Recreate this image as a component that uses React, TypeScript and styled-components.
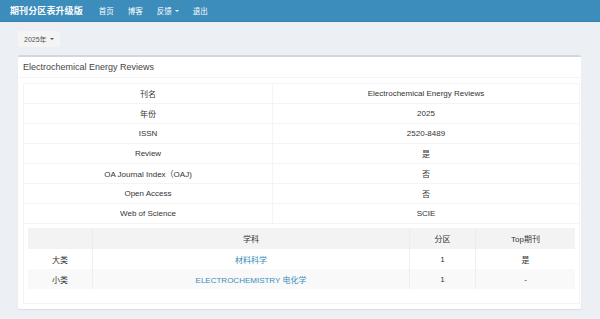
import React from 'react'
import styled, { createGlobalStyle } from 'styled-components'

const GlobalStyle = createGlobalStyle`
html, body {
  margin: 0;
  padding: 0;
  height: 100%;
  background: #ecf0f5;
}
body {
  font-family: "Liberation Sans", Arial, "Noto Sans CJK SC", sans-serif;
  color: #333;
}
`

const info: [string, string][] = [
  ['刊名', 'Electrochemical Energy Reviews'],
  ['年份', '2025'],
  ['ISSN', '2520-8489'],
  ['Review', '是'],
  ['OA Journal Index（OAJ)', '否'],
  ['Open Access', '否'],
  ['Web of Science', 'SCIE'],
]

const subjects = [
  { kind: '大类', name: '材料科学', zone: '1', top: '是' },
  { kind: '小类', name: 'ELECTROCHEMISTRY 电化学', zone: '1', top: '-' },
]

const App = () => {
  return (
    <>
      <GlobalStyle />
      <Navbar>
        <Brand>期刊分区表升级版</Brand>
        <NavItem>首页</NavItem>
        <NavItem>博客</NavItem>
        <NavItem>
          反馈<Caret />
        </NavItem>
        <NavItem>退出</NavItem>
      </Navbar>
      <Content>
        <YearButton>
          2025年<Caret />
        </YearButton>
        <Box>
          <BoxHeader>Electrochemical Energy Reviews</BoxHeader>
          <BoxBody>
            <InfoTable>
              <tbody>
                {info.map(([k, v]) => (
                  <tr key={k}>
                    <InfoCell $first>{k}</InfoCell>
                    <InfoCell>{v}</InfoCell>
                  </tr>
                ))}
                <tr>
                  <NestCell colSpan={2}>
                    <SubjectTable>
                      <thead>
                        <SubRow $bg="#f3f3f3">
                          <SubHead $w={64}></SubHead>
                          <SubHead $w={316}>学科</SubHead>
                          <SubHead $w={65}>分区</SubHead>
                          <SubHead $w={99}>Top期刊</SubHead>
                        </SubRow>
                      </thead>
                      <tbody>
                        {subjects.map((s, i) => (
                          <SubRow key={s.kind} $bg={i % 2 ? '#f9f9f9' : '#fff'}>
                            <SubCell>{s.kind}</SubCell>
                            <SubCell>
                              <Link>{s.name}</Link>
                            </SubCell>
                            <SubCell>{s.zone}</SubCell>
                            <SubCell>{s.top}</SubCell>
                          </SubRow>
                        ))}
                      </tbody>
                    </SubjectTable>
                  </NestCell>
                </tr>
              </tbody>
            </InfoTable>
          </BoxBody>
        </Box>
      </Content>
    </>
  )
}

export default App

const Navbar = styled.div`
display: flex;
align-items: center;
height: 21px;
background: #3c8dbc;
border-bottom: 1px solid #367fa9;
color: #fff;
`
const Brand = styled.div`
font-size: 9px;
font-weight: bold;
padding: 0 9px 0 10px;
letter-spacing: 0.1px;
`
const NavItem = styled.div`
display: flex;
align-items: center;
font-size: 7.5px;
padding: 0 7px;
`
const Caret = styled.span`
display: inline-block;
width: 0;
height: 0;
margin-left: 3px;
border-top: 2.5px solid currentColor;
border-left: 2.5px solid transparent;
border-right: 2.5px solid transparent;
`
const Content = styled.div`
padding: 9px 19px 0 18px;
`
const YearButton = styled.div`
display: flex;
width: fit-content;
align-items: center;
height: 16px;
padding: 0 6px;
background: #f4f4f4;
border-radius: 2px;
font-size: 7px;
color: #555;
`
const Box = styled.div`
margin-top: 8px;
background: #fff;
border-top: 2px solid #d2d6de;
border-radius: 2px;
box-shadow: 0 1px 1px rgba(0, 0, 0, 0.08);
`
const BoxHeader = styled.div`
height: 20px;
display: flex;
align-items: center;
padding: 0 5px;
font-size: 9px;
color: #444;
border-bottom: 1px solid #f4f4f4;
`
const BoxBody = styled.div`
padding: 5px;
`
const InfoTable = styled.table`
width: 100%;
border-collapse: collapse;
border: 1px solid #f4f4f4;
font-size: 8px;
`
const InfoCell = styled.td<{ $first?: boolean }>`
height: 19px;
padding: 0;
text-align: center;
border: 1px solid #f4f4f4;
width: ${(p) => (p.$first ? '248px' : 'auto')};
`
const NestCell = styled.td`
padding: 4px 4px 14px 4px;
border: 1px solid #f4f4f4;
`
const SubjectTable = styled.table`
width: 100%;
border-collapse: collapse;
table-layout: fixed;
font-size: 8px;
`
const SubRow = styled.tr<{ $bg: string }>`
background: ${(p) => p.$bg};
`
const SubHead = styled.th<{ $w: number }>`
width: ${(p) => p.$w}px;
height: 21px;
padding: 0;
font-weight: normal;
text-align: center;
border-left: 1px solid #ececec;
&:first-child { border-left: 0; }
`
const SubCell = styled.td`
height: 20px;
padding: 0;
text-align: center;
border-left: 1px solid #efefef;
&:first-child { border-left: 0; }
`
const Link = styled.span`
color: #3c8dbc;
`
